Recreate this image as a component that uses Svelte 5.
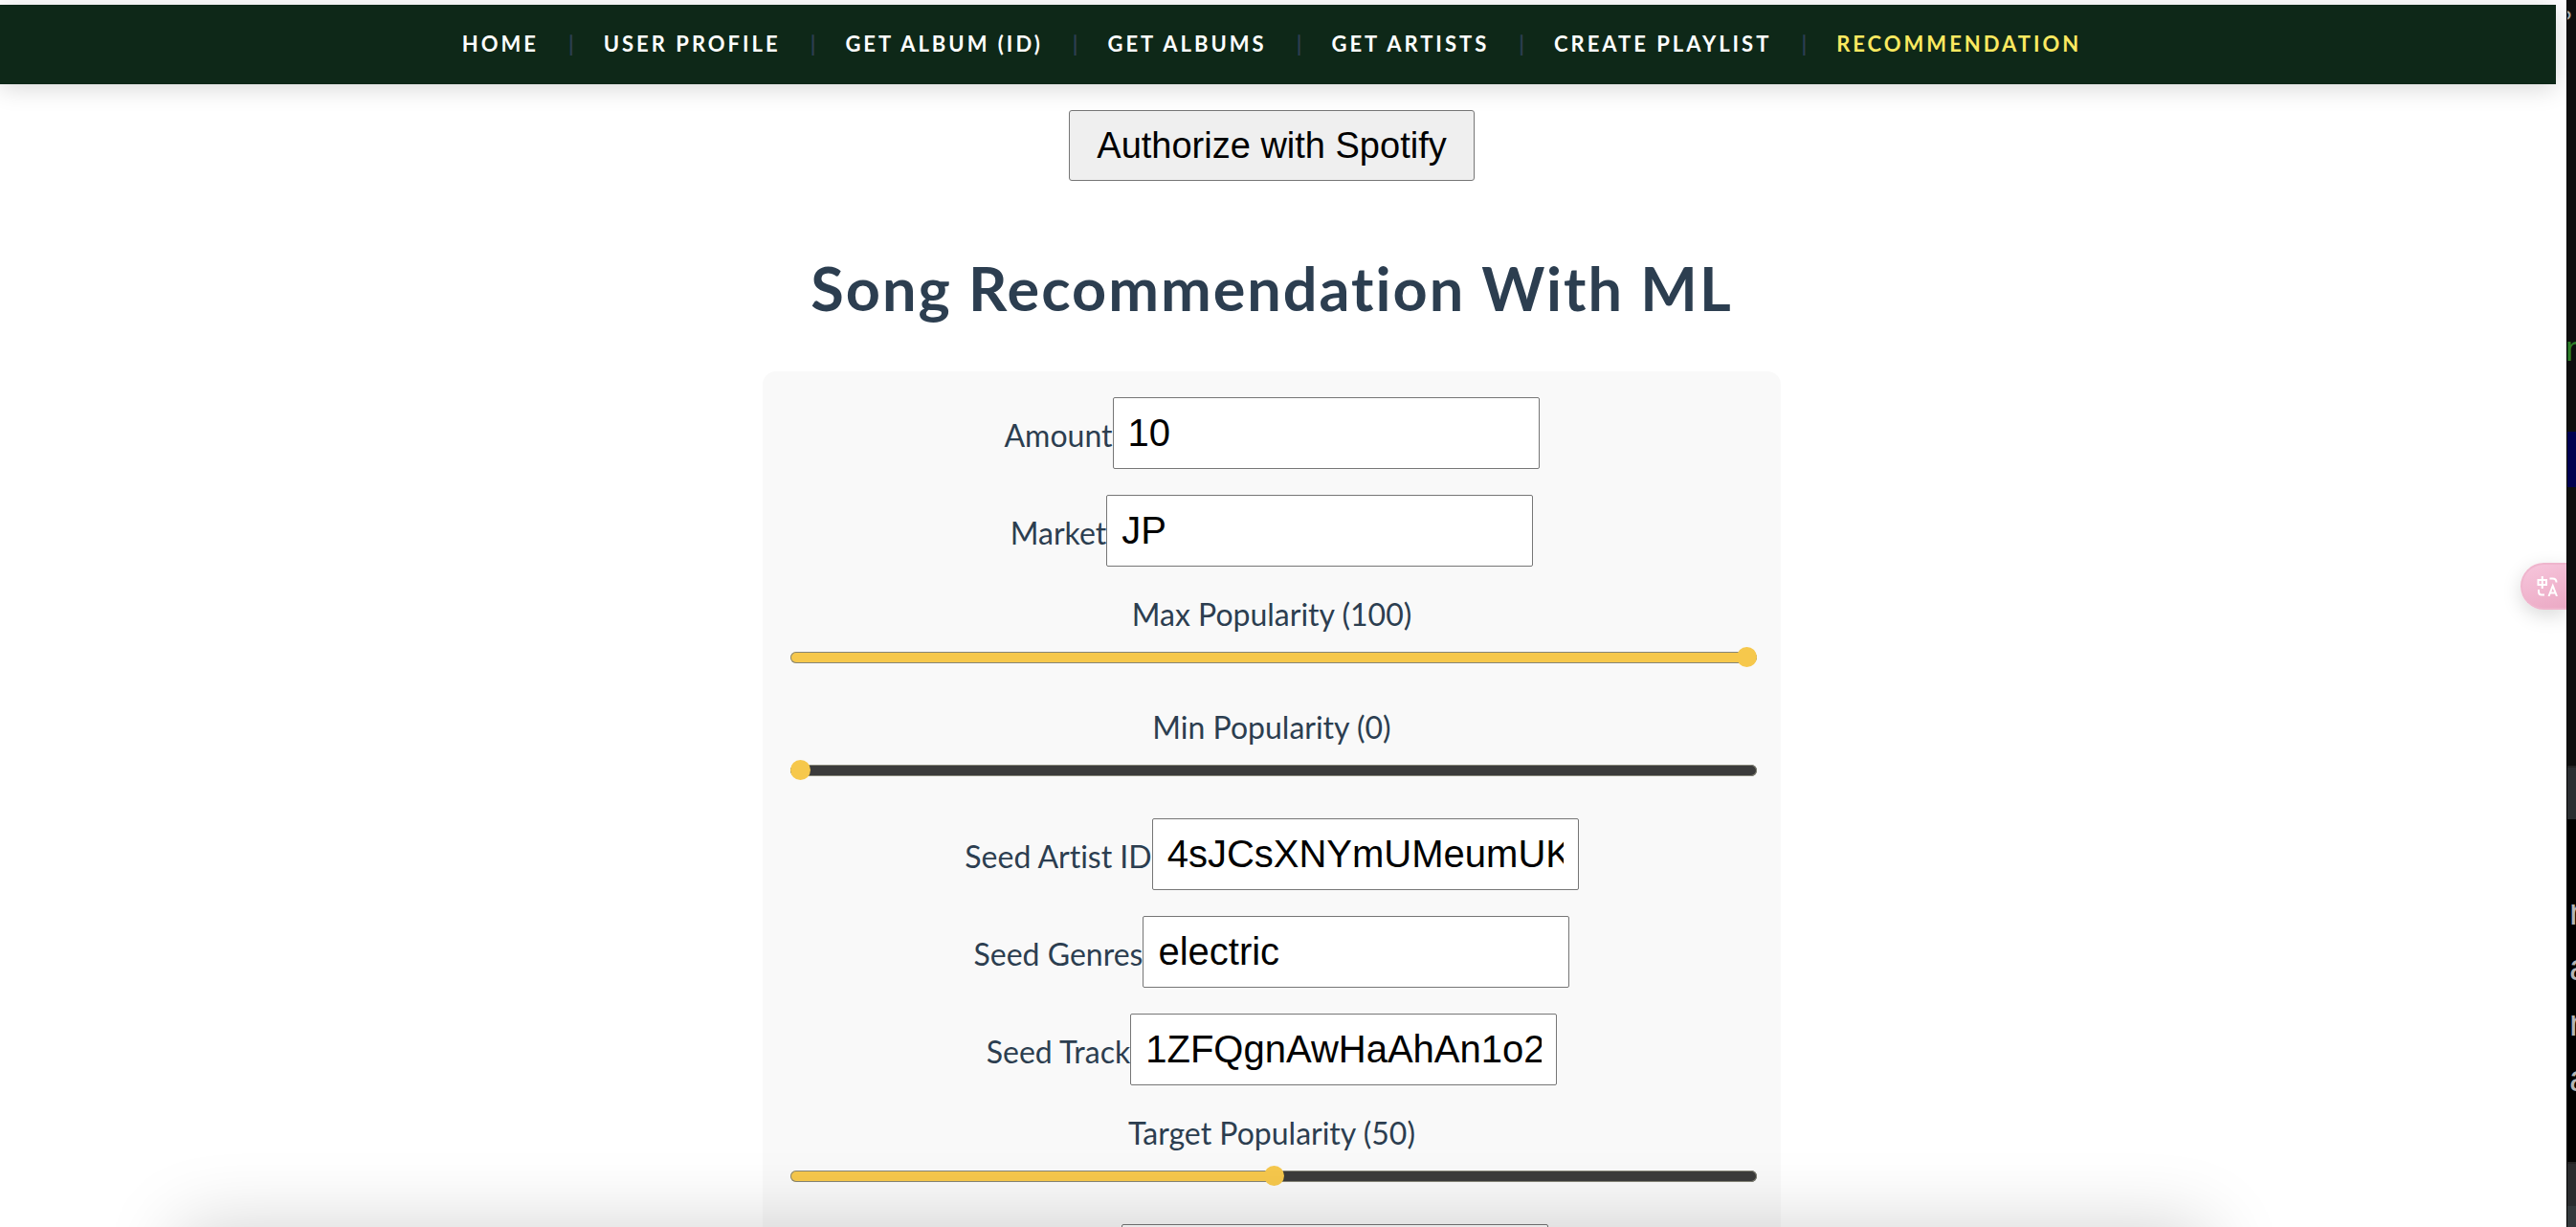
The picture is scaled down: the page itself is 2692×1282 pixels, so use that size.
<script>
  const links = ['Home', 'User Profile', 'Get Album (ID)', 'Get Albums', 'Get Artists', 'Create Playlist', 'Recommendation'];
  let fields = $state([
    { id: 'amount', label: 'Amount', type: 'text', value: '10' },
    { id: 'market', label: 'Market', type: 'text', value: 'JP' },
    { id: 'max-popularity', label: 'Max Popularity', type: 'range', value: 100 },
    { id: 'min-popularity', label: 'Min Popularity', type: 'range', value: 0 },
    { id: 'seed-artist', label: 'Seed Artist ID', type: 'text', value: '4sJCsXNYmUMeumUKVz4Abm' },
    { id: 'seed-genres', label: 'Seed Genres', type: 'text', value: 'electric' },
    { id: 'seed-track', label: 'Seed Track', type: 'text', value: '1ZFQgnAwHaAhAn1o2' },
    { id: 'target-popularity', label: 'Target Popularity', type: 'range', value: 50 },
    { id: 'loudness', label: 'Loudness', type: 'text', value: '' }
  ]);
</script>

<div class="screen">
  <div class="page">
    <nav>
      {#each links as link, i}
        {#if i > 0}<span class="divider">|</span>{/if}
        <a href="#{link.toLowerCase().replaceAll(' ', '-')}" class:active={i === links.length - 1}>{link}</a>
      {/each}
    </nav>
    <main>
      <button class="authorize" type="button">Authorize with Spotify</button>
      <h1>Song Recommendation With ML</h1>
      <form>
        {#each fields as field (field.id)}
          {#if field.type === 'range'}
            <div class="slider">
              <label for={field.id}>{field.label} ({field.value})</label>
              <input id={field.id} type="range" min="0" max="100" bind:value={field.value} style="--fill: {field.value}%" />
            </div>
          {:else}
            <div class="row">
              <label for={field.id}>{field.label}</label>
              <input id={field.id} type="text" bind:value={field.value} />
            </div>
          {/if}
        {/each}
      </form>
    </main>
    <button class="translate" type="button" aria-label="Translate">
      <svg viewBox="0 0 22 21" fill="none" stroke="#fff" stroke-width="2">
        <path d="M1.500 4h8.500v5h-8.500zM5.750 0v13M13.500 2.500h3q4 0 4 4M2 14v2q0 3.500 3 3.500h3" />
        <path d="M12.500 21l4.250-11 4.250 11M14 17.500h5.500" />
      </svg>
    </button>
    <div class="dock-shadow"></div>
  </div>
  <aside>
    <div class="editor"><span class="mark">?</span><span class="code">n</span><span class="selection"></span></div>
    <div class="bar"></div>
    <div class="terminal"><span>r</span><span>a</span><span>r</span><span>a</span></div>
    <div class="bar status"></div>
  </aside>
</div>

<style>
  :global(body) { margin: 0; }
  .screen {
    display: grid;
    grid-template-columns: minmax(0, 1fr) 10px;
    height: 100vh;
    overflow: hidden;
    background: #000;
    font-family: Lato, "Open Sans", sans-serif;
    font-variant-ligatures: none;
    color: #2c3e50;
  }
  .page {
    position: relative;
    height: 100vh;
    overflow: hidden;
    background: #fff;
    box-sizing: border-box;
    padding-top: 5px;
  }
  nav {
    display: flex;
    justify-content: center;
    align-items: center;
    gap: 31px;
    height: 83px;
    box-sizing: border-box;
    margin-right: 11px;
    padding: 0 13px 3px 0;
    background: #0e2818;
    box-shadow: 0 4px 24px rgba(0, 0, 0, 0.16);
    font-size: 22px;
    font-weight: 700;
  }
  nav a {
    color: #fff;
    letter-spacing: 3px;
    text-decoration: none;
    text-transform: uppercase;
    white-space: nowrap;
  }
  nav a.active { color: #fbe960; }
  .divider { color: #2c3e50; }
  main {
    display: flex;
    flex-direction: column;
    align-items: center;
    padding: 27px 24px 0 0;
  }
  .authorize {
    height: 74px;
    padding: 0 28px;
    border: 1px solid #767676;
    border-radius: 3px;
    background: #efefef;
    color: #000;
    font: 38px "Liberation Sans", Arial, sans-serif;
  }
  h1 {
    margin: 72px 0 47px;
    font-size: 63px;
    line-height: 80px;
    font-weight: 700;
    letter-spacing: 2px;
    white-space: nowrap;
  }
  form {
    display: flex;
    flex-direction: column;
    gap: 27px;
    width: 40%;
    padding: 27px;
    box-sizing: border-box;
    border-radius: 14px;
    background: #f9f9f9;
    font-size: 32px;
    line-height: 45px;
  }
  .row {
    display: flex;
    justify-content: center;
    align-items: center;
  }
  .row label { white-space: nowrap; padding-top: 4px; }
  .row input {
    width: 446px;
    height: 75px;
    box-sizing: border-box;
    padding: 0 15px;
    border: 1px solid #767676;
    border-radius: 2px;
    background: #fff;
    color: #000;
    font: 40px "Liberation Sans", Arial, sans-serif;
  }
  .slider {
    display: flex;
    flex-direction: column;
    text-align: center;
  }
  .slider input {
    appearance: none;
    width: 100%;
    height: 46px;
    margin: 0 0 0 2px;
    background: none;
  }
  .slider input::-webkit-slider-runnable-track {
    height: 12px;
    border-radius: 6px;
    background: linear-gradient(to right, #f6c84c var(--fill), #3b3b3b var(--fill));
    box-shadow: inset 0 0 0 1px #858578;
  }
  .slider input::-webkit-slider-thumb {
    appearance: none;
    width: 21px;
    height: 21px;
    margin-top: -5px;
    border-radius: 50%;
    background: #f6c84c;
  }
  .translate {
    position: absolute;
    top: 588px;
    right: 0;
    width: 48px;
    height: 49px;
    box-sizing: border-box;
    padding: 0 0 0 15px;
    border: 2px solid #efb5cd;
    border-right: 0;
    border-radius: 25px 0 0 25px;
    background: linear-gradient(160deg, #f7c6dc, #eba9c4);
    box-shadow: 0 6px 20px rgba(0, 0, 0, 0.15);
  }
  .translate svg { display: block; width: 22px; height: 21px; }
  .dock-shadow {
    position: absolute;
    top: 100%;
    left: 7%;
    right: 14%;
    height: 200px;
    box-shadow: 0 0 80px rgba(0, 0, 0, 0.18);
    pointer-events: none;
  }
  aside {
    display: grid;
    grid-template-rows: 800px 56px 358px 1fr;
    border-left: 1px solid #000;
    overflow: hidden;
    font-family: "Liberation Sans", sans-serif;
  }
  .editor { position: relative; background: #0e0e0e; overflow: hidden; }
  .editor span { position: absolute; }
  .mark { top: 8px; left: -9px; color: #aaa; font-size: 24px; line-height: 24px; }
  .code { top: 346px; left: -2px; color: #2f7f27; font-size: 36px; line-height: 38px; }
  .selection { top: 451px; left: 0; width: 100%; height: 58px; background: #000050; }
  .bar { background: #2b2e31; border-top: 2px solid #222; }
  .status { background: linear-gradient(#2a2b2d 44px, #34393c 44px); }
  .terminal {
    display: flex;
    flex-direction: column;
    padding: 68px 0 0 2px;
    background: #000;
    color: #b5b5b5;
    font-size: 38px;
    line-height: 58px;
  }
</style>
